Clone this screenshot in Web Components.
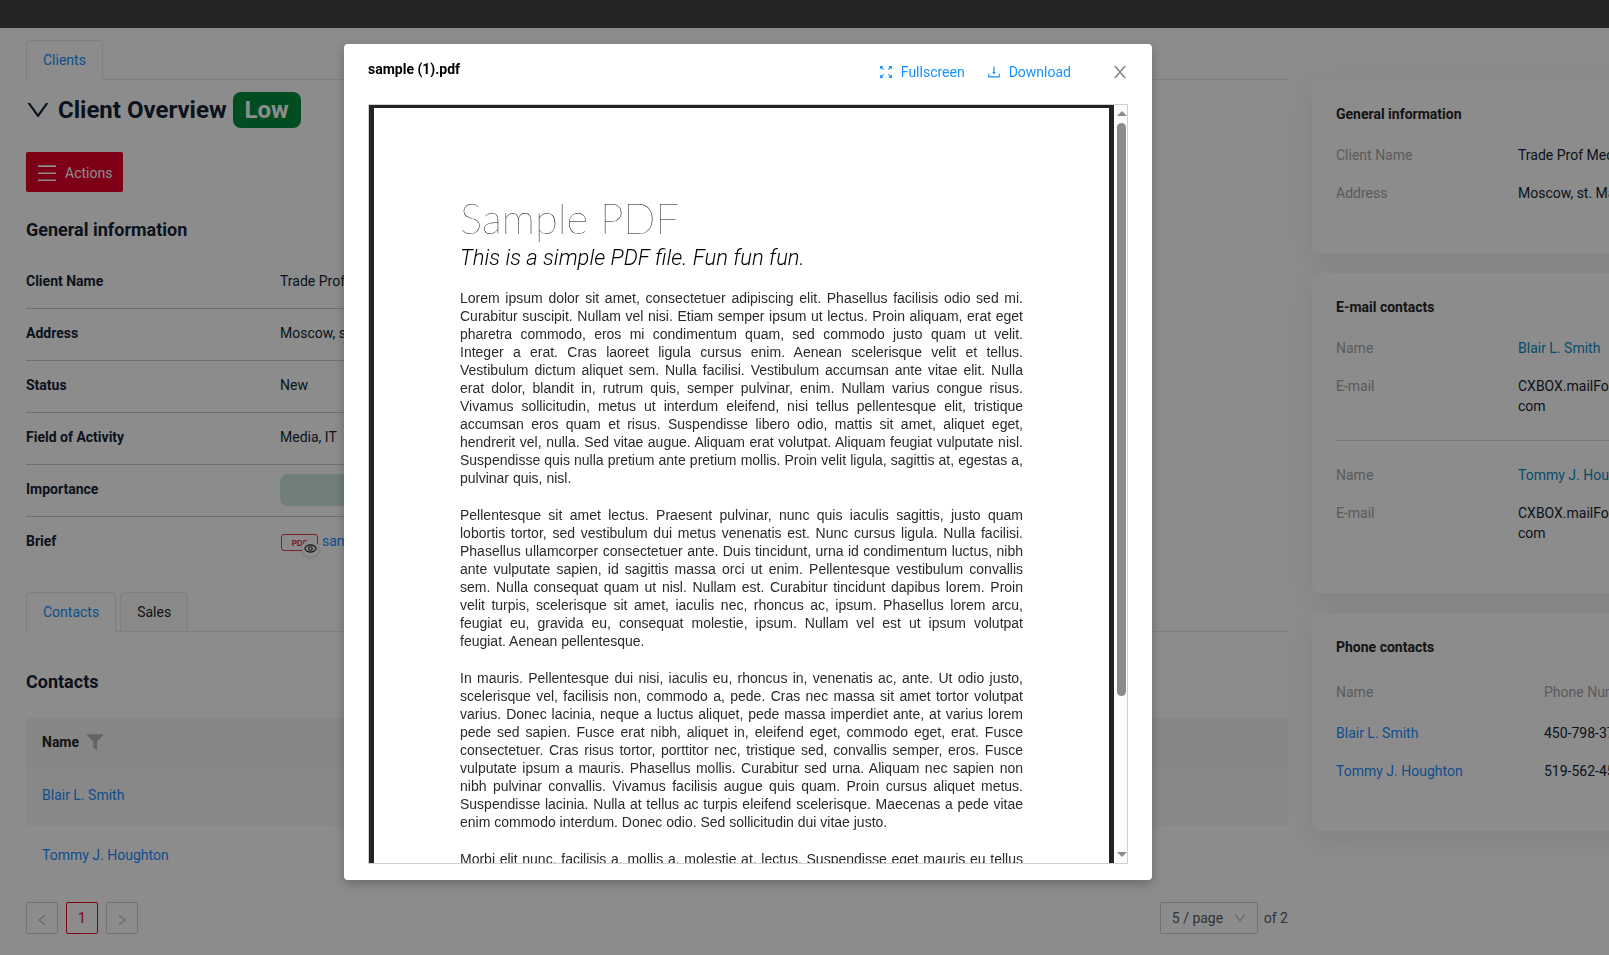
<!DOCTYPE html>
<html lang="en">
<head>
<meta charset="utf-8">
<title>Clients</title>
<style>
  html, body {
    margin: 0;
    height: 100%;
  }

  body {
    font: 14px/22px Roboto, "Liberation Sans", sans-serif;
    color: #141f35;
    background: #fff;
    overflow: hidden;
  }
</style>
</head>
<body>
<client-page></client-page>
<preview-modal name="sample (1).pdf">
  <pdf-viewer></pdf-viewer>
</preview-modal>

<script>
const icons = {
  down: '<path d="M884 256h-75c-5.1 0-9.9 2.5-12.9 6.6L512 654.2 227.9 262.6c-3-4.1-7.8-6.6-12.9-6.6h-75c-6.5 0-10.3 7.4-6.5 12.7l352.6 486.1c12.8 17.6 39 17.6 51.7 0l352.6-486.1c3.9-5.3.1-12.7-6.4-12.7z"/>',
  left: '<path d="M724 218.3V141c0-6.7-7.7-10.4-12.9-6.3L260.3 486.8a31.86 31.86 0 000 50.3l450.8 352.1c5.3 4.1 12.9.4 12.9-6.3v-77.3c0-4.9-2.3-9.6-6.1-12.6l-360-281 360-281.1c3.8-3 6.1-7.7 6.1-12.6z"/>',
  right: '<path d="M765.7 486.8L314.9 134.7A7.97 7.97 0 00302 141v77.3c0 4.9 2.3 9.6 6.1 12.6l360 281.1-360 281.1c-3.9 3-6.1 7.7-6.1 12.6V883c0 6.7 7.7 10.4 12.9 6.3l450.8-352.1a31.96 31.96 0 000-50.4z"/>',
  close: '<path d="M563.8 512l262.5-312.9c4.4-5.2.7-13.1-6.1-13.1h-79.8c-4.7 0-9.2 2.1-12.3 5.7L511.6 449.8 295.1 191.7c-3-3.6-7.5-5.7-12.3-5.7H203c-6.8 0-10.5 7.9-6.1 13.1L459.4 512 196.9 824.9A7.95 7.95 0 00203 838h79.8c4.7 0 9.2-2.1 12.3-5.7l216.5-258.1 216.5 258.1c3 3.6 7.5 5.7 12.3 5.7h79.8c6.8 0 10.5-7.9 6.1-13.1L563.8 512z"/>',
  download: '<path d="M505.7 661a8 8 0 0012.6 0l112-141.7c4.1-5.2.4-12.9-6.3-12.9h-74.1V168c0-4.4-3.6-8-8-8h-60c-4.4 0-8 3.6-8 8v338.3H400c-6.7 0-10.4 7.7-6.3 12.9l112 141.8zM878 626h-60c-4.4 0-8 3.6-8 8v154H214V634c0-4.4-3.6-8-8-8h-60c-4.4 0-8 3.6-8 8v198c0 17.7 14.3 32 32 32h684c17.7 0 32-14.3 32-32V634c0-4.4-3.6-8-8-8z"/>',
  menu: '<path d="M50 120h924v80H50zM50 480h924v80H50zM50 840h924v80H50z"/>',
  filter: '<path d="M10 10h1004v80L640 480v534L400 900V480L10 90z"/>',
  fullscreen: '<path d="M120 120l230 26-76 76 110 110-54 54-110-110-74 74zM904 120l-230 26 76 76-110 110 54 54 110-110 74 74zM120 904l230-26-76-76 110-110-54-54-110 110-74-74zM904 904l-230-26 76-76-110-110 54-54 110 110 74-74z"/>',
  eye: '<g fill="none" stroke="currentColor" stroke-width="90"><path d="M60 512C260 130 764 130 964 512 764 894 260 894 60 512z"/><circle cx="512" cy="512" r="140"/></g>'
};

class UiIcon extends HTMLElement {
  connectedCallback() {
    this.attachShadow({ mode: 'open' }).innerHTML = `
      <style>
        :host { display: inline-flex; flex: none; width: 16px; height: 16px; }
        svg { width: 100%; height: 100%; fill: currentColor; }
      </style>
      <svg viewBox="0 0 1024 1024" aria-hidden="true">${icons[this.getAttribute('name')]}</svg>
    `;
  }
}
customElements.define('ui-icon', UiIcon);

class TabBar extends HTMLElement {
  connectedCallback() {
    const tabs = this.getAttribute('tabs').split(',');
    this.attachShadow({ mode: 'open' }).innerHTML = `
      <style>
        :host {
          display: flex;
          gap: 4px;
          height: 40px;
          box-sizing: border-box;
          border-bottom: 1px solid #e8e8e8;
        }
        button {
          height: 40px;
          padding: 0 16px;
          font: inherit;
          color: #262626;
          background: #fafafa;
          border: 1px solid #e8e8e8;
          border-radius: 4px 4px 0 0;
        }
        button[aria-selected=true] {
          color: #1890ff;
          background: #fff;
          border-bottom-color: #fff;
        }
      </style>
      ${tabs.map((tab, i) => `<button role="tab" aria-selected="${i === 0}">${tab}</button>`).join('')}
    `;
    this.setAttribute('role', 'tablist');
  }
}
customElements.define('tab-bar', TabBar);

class InfoRow extends HTMLElement {
  connectedCallback() {
    this.attachShadow({ mode: 'open' }).innerHTML = `
      <style>
        :host {
          display: grid;
          grid-template-columns: 254px 1fr;
          height: 52px;
          padding-bottom: 4px;
          box-sizing: border-box;
          align-items: center;
          border-bottom: 1px solid #cdcdcd;
        }
        :host([last]) { border-color: transparent; }
        b { font-weight: 700; }
      </style>
      <b>${this.getAttribute('label')}</b>
      <slot></slot>
    `;
  }
}
customElements.define('info-row', InfoRow);

class FileLink extends HTMLElement {
  connectedCallback() {
    this.attachShadow({ mode: 'open' }).innerHTML = `
      <style>
        :host { display: flex; align-items: center; gap: 4px; padding-left: 1px; }
        .type {
          position: relative;
          width: 37px;
          height: 17px;
          margin-top: 4px;
          box-sizing: border-box;
          border: 1px solid #e5394c;
          border-radius: 3px;
          color: #e5394c;
          font: bold 8px/16px Inter, sans-serif;
          text-align: center;
        }
        .eye {
          position: absolute;
          right: -2px;
          bottom: -7px;
          display: flex;
          align-items: center;
          justify-content: center;
          width: 17px;
          height: 17px;
          border-radius: 50%;
          background: #fff;
          box-shadow: 0 1px 3px rgba(0, 0, 0, 0.2);
          color: #222;
        }
        .eye ui-icon { width: 13px; height: 13px; }
        a { color: #1890ff; text-decoration: none; }
      </style>
      <span class="type">PDF<span class="eye"><ui-icon name="eye"></ui-icon></span></span>
      <a href="#"><slot></slot></a>
    `;
  }
}
customElements.define('file-link', FileLink);

class ContactsTable extends HTMLElement {
  connectedCallback() {
    this.attachShadow({ mode: 'open' }).innerHTML = `
      <style>
        :host { display: block; }
        table { width: 100%; border-collapse: separate; border-spacing: 0; }
        th, td { padding: 0 16px; text-align: left; }
        th {
          height: 48px;
          background: #f5f5f5;
          border-radius: 4px 4px 0 0;
          color: #222;
          font-weight: 700;
        }
        th div { display: flex; align-items: center; gap: 8px; }
        th ui-icon { color: #b5b5b5; }
        td { height: 58px; padding-bottom: 2px; }
        tr:nth-child(odd) td { background: #f8f8f8; }
        a { color: #1890ff; text-decoration: none; }
      </style>
      <table>
        <thead><tr><th scope="col"><div>Name <ui-icon name="filter"></ui-icon></div></th></tr></thead>
        <tbody>
          <tr><td><a href="#">Blair L. Smith</a></td></tr>
          <tr><td><a href="#">Tommy J. Houghton</a></td></tr>
        </tbody>
      </table>
    `;
  }
}
customElements.define('contacts-table', ContactsTable);

class PageNav extends HTMLElement {
  connectedCallback() {
    this.attachShadow({ mode: 'open' }).innerHTML = `
      <style>
        :host { display: flex; align-items: center; gap: 8px; color: #5c5c5c; }
        button {
          display: flex;
          align-items: center;
          justify-content: center;
          width: 32px;
          height: 32px;
          padding: 0;
          border: 1px solid #d0d0d0;
          border-radius: 2px;
          background: #fff;
          color: #b4b4b4;
          font: inherit;
        }
        button ui-icon { width: 14px; height: 14px; padding-top: 4px; }
        button.current { border-color: #e4002b; color: #e4002b; }
        .size { display: grid; align-items: center; margin-left: auto; }
        .size > * { grid-area: 1 / 1; }
        select {
          appearance: none;
          width: 98px;
          height: 32px;
          padding: 0 11px;
          border: 1px solid #d0d0d0;
          border-radius: 2px;
          background: #fff;
          color: inherit;
          font: inherit;
        }
        .size ui-icon { width: 14px; height: 14px; margin-right: 11px; justify-self: end; color: #b4b4b4; }
        .total { margin-left: -2px; }
      </style>
      <button aria-label="Previous page"><ui-icon name="left"></ui-icon></button>
      <button class="current">1</button>
      <button aria-label="Next page"><ui-icon name="right"></ui-icon></button>
      <div class="size">
        <select aria-label="Page size"><option>5 / page</option></select>
        <ui-icon name="down"></ui-icon>
      </div>
      <span class="total">of 2</span>
    `;
  }
}
customElements.define('page-nav', PageNav);

class SideCard extends HTMLElement {
  connectedCallback() {
    this.attachShadow({ mode: 'open' }).innerHTML = `
      <style>
        :host {
          display: block;
          padding: 24px 24px 50px;
          border-radius: 8px;
          background: #fff;
          box-shadow: 0 8px 28px rgba(33, 63, 113, 0.11);
          line-height: 20px;
        }
        h3 { margin: 0 0 21px; font-size: 14px; font-weight: 700; color: #262626; }
      </style>
      <h3>${this.getAttribute('heading')}</h3>
      <slot></slot>
    `;
  }
}
customElements.define('side-card', SideCard);

class SideFields extends HTMLElement {
  connectedCallback() {
    this.attachShadow({ mode: 'open' }).innerHTML = `
      <style>
        :host {
          display: grid;
          grid-template-columns: 182px 1fr;
          row-gap: 18px;
        }
        :host(:not(:last-child)) {
          padding-bottom: 24px;
          margin-bottom: 24px;
          border-bottom: 1px solid #dcdcdc;
        }
        ::slotted(span) { color: #a6a6a6; }
        ::slotted(a) { color: #0a8cc4; text-decoration: none; }
      </style>
      <slot></slot>
    `;
  }
}
customElements.define('side-fields', SideFields);

class PhoneTable extends HTMLElement {
  connectedCallback() {
    this.attachShadow({ mode: 'open' }).innerHTML = `
      <style>
        :host { display: block; }
        table { width: 100%; border-collapse: collapse; table-layout: fixed; }
        th, td { padding: 9px 0; text-align: left; }
        th { padding: 4px 0 12px; color: #a6a6a6; font-weight: 400; }
        th:first-child { width: 208px; }
        tr:last-child td { padding-bottom: 0; }
        a { color: #1890ff; text-decoration: none; }
      </style>
      <table>
        <thead><tr><th scope="col">Name</th><th scope="col">Phone Number</th></tr></thead>
        <tbody>
          <tr><td><a href="#">Blair L. Smith</a></td><td>450-798-3710</td></tr>
          <tr><td><a href="#">Tommy J. Houghton</a></td><td>519-562-4500</td></tr>
        </tbody>
      </table>
    `;
  }
}
customElements.define('phone-table', PhoneTable);

class ClientPage extends HTMLElement {
  connectedCallback() {
    this.attachShadow({ mode: 'open' }).innerHTML = `
      <style>
        :host { display: block; height: 100%; overflow: hidden; }
        header { height: 28px; background: #3f4245; }
        /* side column runs past the right edge of the window */
        main {
          display: grid;
          grid-template-columns: minmax(0, 1fr) 420px;
          gap: 24px;
          align-items: start;
          margin-right: -123px;
          padding: 12px 0 20px 26px;
        }
        h1, h2 { margin: 0; font-weight: 700; }
        h1 {
          display: flex;
          align-items: center;
          gap: 6px;
          margin: 12px 0 24px -2px;
          font-size: 24px;
          line-height: 36px;
        }
        h1 ui-icon { width: 28px; height: 28px; }
        .badge {
          padding: 0 12px;
          border-radius: 8px;
          background: #008c3c;
          color: #fff;
        }
        h2 { font-size: 18px; line-height: 24px; }
        .actions {
          display: flex;
          align-items: center;
          gap: 8px;
          height: 40px;
          margin-bottom: 26px;
          padding: 2px 11px 0;
          border: 0;
          border-radius: 2px;
          background: #e4002b;
          color: #fff;
          font: inherit;
        }
        .actions ui-icon { width: 20px; height: 20px; }
        .rows { margin: 15px 200px 23px 0; }
        .pill { height: 32px; margin-top: 2px; border-radius: 8px; background: #cce8d9; }
        .list { margin-top: 38px; }
        contacts-table { margin: 24px 0 16px; }
        aside { display: grid; gap: 20px; margin-top: 40px; }
      </style>
      <header></header>
      <main>
        <section>
          <tab-bar tabs="Clients"></tab-bar>
          <h1><ui-icon name="down"></ui-icon>Client Overview <span class="badge">Low</span></h1>
          <button class="actions"><ui-icon name="menu"></ui-icon>Actions</button>
          <h2>General information</h2>
          <div class="rows">
            <info-row label="Client Name">Trade Prof Media</info-row>
            <info-row label="Address">Moscow, st. Marksistskaya</info-row>
            <info-row label="Status">New</info-row>
            <info-row label="Field of Activity">Media, IT</info-row>
            <info-row label="Importance"><div class="pill"></div></info-row>
            <info-row label="Brief" last><file-link>sample (1).pdf</file-link></info-row>
          </div>
          <tab-bar tabs="Contacts,Sales"></tab-bar>
          <h2 class="list">Contacts</h2>
          <contacts-table></contacts-table>
          <page-nav></page-nav>
        </section>
        <aside>
          <side-card heading="General information">
            <side-fields>
              <span>Client Name</span><div>Trade Prof Media</div>
              <span>Address</span><div>Moscow, st. Marksistskaya</div>
            </side-fields>
          </side-card>
          <side-card heading="E-mail contacts">
            <side-fields>
              <span>Name</span><a href="#">Blair L. Smith</a>
              <span>E-mail</span><div>CXBOX.mailFor@mail.<br>com</div>
            </side-fields>
            <side-fields>
              <span>Name</span><a href="#">Tommy J. Houghton</a>
              <span>E-mail</span><div>CXBOX.mailFor@mail.<br>com</div>
            </side-fields>
          </side-card>
          <side-card heading="Phone contacts"><phone-table></phone-table></side-card>
        </aside>
      </main>
    `;
  }
}
customElements.define('client-page', ClientPage);

const paragraphs = [
  [
    'Lorem ipsum dolor sit amet, consectetuer adipiscing elit. Phasellus facilisis odio sed mi.',
    'Curabitur suscipit. Nullam vel nisi. Etiam semper ipsum ut lectus. Proin aliquam, erat eget',
    'pharetra commodo, eros mi condimentum quam, sed commodo justo quam ut velit.',
    'Integer a erat. Cras laoreet ligula cursus enim. Aenean scelerisque velit et tellus.',
    'Vestibulum dictum aliquet sem. Nulla facilisi. Vestibulum accumsan ante vitae elit. Nulla',
    'erat dolor, blandit in, rutrum quis, semper pulvinar, enim. Nullam varius congue risus.',
    'Vivamus sollicitudin, metus ut interdum eleifend, nisi tellus pellentesque elit, tristique',
    'accumsan eros quam et risus. Suspendisse libero odio, mattis sit amet, aliquet eget,',
    'hendrerit vel, nulla. Sed vitae augue. Aliquam erat volutpat. Aliquam feugiat vulputate nisl.',
    'Suspendisse quis nulla pretium ante pretium mollis. Proin velit ligula, sagittis at, egestas a,',
    'pulvinar quis, nisl.'
  ],
  [
    'Pellentesque sit amet lectus. Praesent pulvinar, nunc quis iaculis sagittis, justo quam',
    'lobortis tortor, sed vestibulum dui metus venenatis est. Nunc cursus ligula. Nulla facilisi.',
    'Phasellus ullamcorper consectetuer ante. Duis tincidunt, urna id condimentum luctus, nibh',
    'ante vulputate sapien, id sagittis massa orci ut enim. Pellentesque vestibulum convallis',
    'sem. Nulla consequat quam ut nisl. Nullam est. Curabitur tincidunt dapibus lorem. Proin',
    'velit turpis, scelerisque sit amet, iaculis nec, rhoncus ac, ipsum. Phasellus lorem arcu,',
    'feugiat eu, gravida eu, consequat molestie, ipsum. Nullam vel est ut ipsum volutpat',
    'feugiat. Aenean pellentesque.'
  ],
  [
    'In mauris. Pellentesque dui nisi, iaculis eu, rhoncus in, venenatis ac, ante. Ut odio justo,',
    'scelerisque vel, facilisis non, commodo a, pede. Cras nec massa sit amet tortor volutpat',
    'varius. Donec lacinia, neque a luctus aliquet, pede massa imperdiet ante, at varius lorem',
    'pede sed sapien. Fusce erat nibh, aliquet in, eleifend eget, commodo eget, erat. Fusce',
    'consectetuer. Cras risus tortor, porttitor nec, tristique sed, convallis semper, eros. Fusce',
    'vulputate ipsum a mauris. Phasellus mollis. Curabitur sed urna. Aliquam nec sapien non',
    'nibh pulvinar convallis. Vivamus facilisis augue quis quam. Proin cursus aliquet metus.',
    'Suspendisse lacinia. Nulla at tellus ac turpis eleifend scelerisque. Maecenas a pede vitae',
    'enim commodo interdum. Donec odio. Sed sollicitudin dui vitae justo.'
  ],
  [
    'Morbi elit nunc, facilisis a, mollis a, molestie at, lectus. Suspendisse eget mauris eu tellus',
    ''
  ]
];

class PdfViewer extends HTMLElement {
  connectedCallback() {
    this.attachShadow({ mode: 'open' }).innerHTML = `
      <style>
        :host {
          display: flex;
          height: 760px;
          box-sizing: border-box;
          border: 1px solid #d0d0d0;
          overflow: hidden;
        }
        .canvas { flex: 1; min-width: 0; padding: 3px 5px 0; background: #222424; }
        .page {
          height: 100%;
          box-sizing: border-box;
          padding: 86px 86px 0;
          background: #fff;
          color: #2a2a2a;
        }
        h1 { margin: 0; font: 100 42px/48px Lato, Roboto, sans-serif; color: #000; }
        h2 { margin: 0 0 15px; font: italic 300 22px/32px Roboto, sans-serif; color: #000; }
        p { margin: 0 0 19px; font: 14px/18px "Liberation Sans", Arial, sans-serif; }
        span { display: block; white-space: nowrap; text-align-last: justify; }
        span:last-child { text-align-last: left; }
        .scrollbar {
          display: flex;
          flex-direction: column;
          align-items: center;
          width: 13px;
          padding: 6px 0 6px 2px;
          box-sizing: border-box;
          background: #fcfcfc;
        }
        .arrow { border: 5px solid transparent; border-top: 0; border-bottom-color: #8b8b8b; }
        .arrow.down { margin-top: auto; border-top: 5px solid #8b8b8b; border-bottom: 0; }
        .thumb { width: 9px; height: 573px; margin-top: 7px; border-radius: 5px; background: #8b8b8b; }
      </style>
      <div class="canvas">
        <div class="page">
          <h1>Sample PDF</h1>
          <h2>This is a simple PDF file. Fun fun fun.</h2>
          ${paragraphs.map(lines => `<p>${lines.map(line => `<span>${line}</span>`).join('')}</p>`).join('')}
        </div>
      </div>
      <div class="scrollbar">
        <div class="arrow"></div>
        <div class="thumb"></div>
        <div class="arrow down"></div>
      </div>
    `;
  }
}
customElements.define('pdf-viewer', PdfViewer);

class PreviewModal extends HTMLElement {
  connectedCallback() {
    this.attachShadow({ mode: 'open' }).innerHTML = `
      <style>
        :host {
          position: fixed;
          inset: 0;
          display: flex;
          justify-content: center;
          align-items: flex-start;
          padding: 44px 113px 0 0;
          background: rgba(0, 0, 0, 0.45);
        }
        .dialog {
          width: 808px;
          padding: 0 24px 16px;
          box-sizing: border-box;
          border-radius: 4px;
          background: #fff;
          box-shadow: 0 4px 12px rgba(0, 0, 0, 0.25);
        }
        .top { display: flex; align-items: flex-start; height: 60px; padding-top: 14px; box-sizing: border-box; }
        h2 { margin: 0 auto 0 0; font-size: 14px; line-height: 22px; font-weight: 700; color: #000; }
        button {
          display: flex;
          align-items: center;
          gap: 7px;
          height: 28px;
          margin-right: 21px;
          padding: 0;
          border: 0;
          background: none;
          color: #1890ff;
          font: inherit;
        }
        .close { margin: 0 -2px 0 18px; color: #8c8c8c; }
        .close ui-icon { width: 20px; height: 20px; }
      </style>
      <div class="dialog" role="dialog" aria-label="${this.getAttribute('name')}">
        <div class="top">
          <h2>${this.getAttribute('name')}</h2>
          <button><ui-icon name="fullscreen"></ui-icon>Fullscreen</button>
          <button><ui-icon name="download"></ui-icon>Download</button>
          <button class="close" aria-label="Close"><ui-icon name="close"></ui-icon></button>
        </div>
        <slot></slot>
      </div>
    `;
  }
}
customElements.define('preview-modal', PreviewModal);
</script>
</body>
</html>
